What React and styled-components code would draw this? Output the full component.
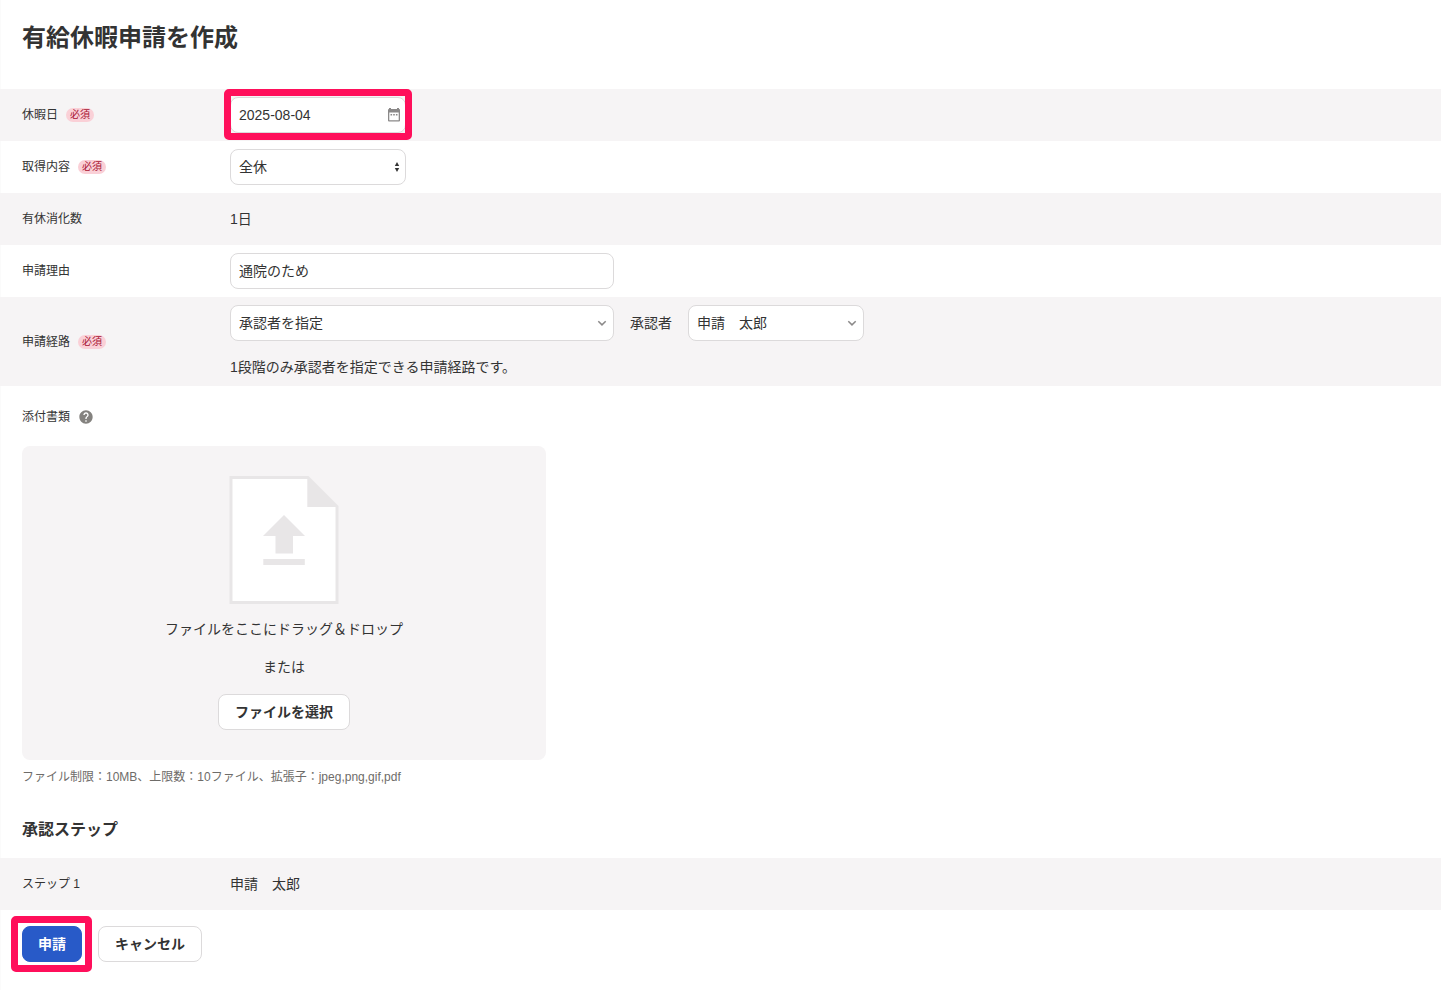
import { useState } from 'react';
import styled, { createGlobalStyle, css } from 'styled-components';

const colors = {
  text: '#333333',
  muted: '#6e6c69',
  stripe: '#f6f4f5',
  border: '#dcdadb',
  shape: '#e8e6e7',
  primary: '#285ac8',
  mark: '#ff0f5b'
};

const GlobalStyle = createGlobalStyle`
  * {
    box-sizing: border-box;
  }

  body {
    margin: 0;
    background: #ffffff;
    color: ${colors.text};
    font-family: "Liberation Sans", "Noto Sans CJK JP", sans-serif;
    font-size: 14px;
    line-height: 20px;
  }

  input, select, button {
    font: inherit;
    color: inherit;
  }
`;

const Page = styled.main`
  min-height: 990px;
  border-left: 1px solid #fbfbfb;
`;

const Title = styled.h1`
  margin: 0;
  padding: 22px 0 35px 21px;
  font-size: 24px;
  line-height: 32px;
`;

const SubTitle = styled.h2`
  margin: 0;
  padding: 31px 0 16px 21px;
  font-size: 16px;
  line-height: 24px;
`;

const Row = styled.div`
  display: grid;
  grid-template-columns: 208px 1fr;
  align-items: center;
  min-height: 52px;
  margin-left: -1px;
  padding: 8px 0 8px 22px;
  background: ${p => (p.$striped ? colors.stripe : 'transparent')};
`;

const Label = styled.div`
  display: flex;
  align-items: center;
  gap: 8px;
  height: ${p => (p.$tall ? 21 : 20)}px;
  font-size: 12px;
  padding: ${p => (p.$tall ? '1px 0 0' : '0 0 1px')};
`;

const Required = styled.span`
  padding: 0 4px;
  border-radius: 7px;
  background: #fad0d7;
  color: #a81434;
  font-size: 10px;
  line-height: 14px;
`;

const Line = styled.div`
  display: flex;
  align-items: center;
  gap: 16px;
`;

const Hint = styled.div`
  padding: 16px 0 1px;
`;

const Field = styled.label`
  position: relative;
  display: flex;
  align-items: center;
  width: ${p => (p.$wide ? 384 : 176)}px;
  height: 36px;

  svg {
    position: absolute;
    pointer-events: none;
  }
`;

const control = css`
  width: 100%;
  height: 36px;
  margin: 0;
  padding: 0 8px;
  border: 1px solid ${colors.border};
  border-radius: 8px;
  background: #ffffff;
  outline: none;
`;

const Input = styled.input`
  ${control}
  padding-bottom: ${p => p.$lift || 0}px;
`;

const Select = styled.select`
  ${control}
  appearance: none;
`;

// Red frame drawn over the form to point at a control
const Mark = styled.div`
  position: relative;
  width: fit-content;

  &::after {
    content: '';
    position: absolute;
    inset: ${p => p.$inset};
    border: 7px solid ${colors.mark};
    border-radius: 5px;
    pointer-events: none;
  }
`;

const Attachment = styled.section`
  padding: 21px 0 0 21px;
`;

const DropZone = styled.div`
  display: flex;
  flex-direction: column;
  align-items: center;
  width: 524px;
  height: 314px;
  margin-top: 19px;
  padding-top: 30px;
  border-radius: 8px;
  background: ${colors.stripe};
`;

const DropText = styled.p`
  margin: ${p => p.$top}px 0 0;
`;

const Note = styled.p`
  margin: 7px 0 0;
  color: ${colors.muted};
  font-size: 12px;
`;

const Button = styled.button`
  height: 36px;
  padding: 0 ${p => (p.$primary ? 15 : 16)}px;
  border: 1px solid ${p => (p.$primary ? colors.primary : colors.border)};
  border-radius: 8px;
  background: ${p => (p.$primary ? colors.primary : '#ffffff')};
  color: ${p => (p.$primary ? '#ffffff' : colors.text)};
  font-weight: bold;
`;

const FileButton = styled(Button)`
  margin-top: 17px;
`;

const Actions = styled.div`
  display: flex;
  gap: 16px;
  padding: 16px 21px;
`;

const CalendarIcon = () => (
  <svg width="14" height="16" viewBox="0 0 14 16" style={{ right: 5 }}>
    <path
      fill="#8b8989"
      fillRule="evenodd"
      d="M2 1h2v1h6V1h2v1h.2A1 1 0 0 1 13 3v10.500a1 1 0 0 1-1 1H2a1 1 0 0 1-1-1V3a1 1 0 0 1 1-1zM2.300 5.500v7.700h9.400V5.500z"
    />
    <path fill="#8b8989" d="M3.500 7h1.600v1.400H3.500zM6.200 7h1.600v1.400H6.200zM8.900 7h1.600v1.400H8.900z" />
  </svg>
);

const SortIcon = () => (
  <svg width="6" height="10" viewBox="0 0 6 10" style={{ right: 6 }}>
    <path fill={colors.text} d="M3 0 5.200 4H.8zM3 10 .8 6h4.400z" />
  </svg>
);

const ChevronIcon = () => (
  <svg width="10" height="8" viewBox="0 0 10 8" style={{ right: 7 }}>
    <path fill="none" stroke="#8b8989" strokeWidth="1.500" d="M1.300 2.200 5 5.900l3.700-3.700" />
  </svg>
);

const HelpIcon = () => (
  <svg width="16" height="16" viewBox="0 0 24 24">
    <path
      fill="#84827f"
      d="M12 2C6.480 2 2 6.480 2 12s4.480 10 10 10 10-4.480 10-10S17.520 2 12 2zm1 17h-2v-2h2v2zm2.070-7.750-.9.920C13.450 12.900 13 13.500 13 15h-2v-.5c0-1.100.45-2.100 1.170-2.830l1.240-1.260c.37-.36.59-.86.59-1.410 0-1.100-.9-2-2-2s-2 .9-2 2H8c0-2.210 1.790-4 4-4s4 1.790 4 4c0 .88-.36 1.680-.93 2.250z"
    />
  </svg>
);

const UploadIcon = () => (
  <svg width="110" height="128" viewBox="0 0 110 128">
    <path fill={colors.shape} d="M.5 0H79.500l30 30v98H.5z" />
    <path fill="#ffffff" d="M3.500 3h74.800v28h28.200v94h-103z" />
    <path fill={colors.shape} d="M55 39 76 60H64v17.500H46.500V60H34zM34.300 83h41.500v6H34.300z" />
  </svg>
);

const FormRow = ({ label, required, striped, tall, children }) => (
  <Row $striped={striped}>
    <Label $tall={tall}>
      {label}
      {required && <Required>必須</Required>}
    </Label>
    <div>{children}</div>
  </Row>
);

const App = () => {
  const [date, setDate] = useState('2025-08-04');
  const [reason, setReason] = useState('通院のため');

  return (
    <>
      <GlobalStyle />
      <Page>
        <Title>有給休暇申請を作成</Title>

        <FormRow label="休暇日" required striped>
          <Mark $inset="-8px -6px -7px">
            <Field>
              <Input value={date} onChange={e => setDate(e.target.value)} />
              <CalendarIcon />
            </Field>
          </Mark>
        </FormRow>
        <FormRow label="取得内容" required>
          <Field>
            <Select>
              <option>全休</option>
            </Select>
            <SortIcon />
          </Field>
        </FormRow>
        <FormRow label="有休消化数" striped>
          1日
        </FormRow>
        <FormRow label="申請理由">
          <Field $wide>
            <Input $lift={2} value={reason} onChange={e => setReason(e.target.value)} />
          </Field>
        </FormRow>
        <FormRow label="申請経路" required striped tall>
          <Line>
            <Field $wide>
              <Select>
                <option>承認者を指定</option>
              </Select>
              <ChevronIcon />
            </Field>
            <span>承認者</span>
            <Field>
              <Select>
                <option>申請　太郎</option>
              </Select>
              <ChevronIcon />
            </Field>
          </Line>
          <Hint>1段階のみ承認者を指定できる申請経路です。</Hint>
        </FormRow>

        <Attachment>
          <Label>
            添付書類
            <HelpIcon />
          </Label>
          <DropZone>
            <UploadIcon />
            <DropText $top={15}>ファイルをここにドラッグ＆ドロップ</DropText>
            <DropText $top={18}>または</DropText>
            <FileButton type="button">ファイルを選択</FileButton>
          </DropZone>
          <Note>ファイル制限：10MB、上限数：10ファイル、拡張子：jpeg,png,gif,pdf</Note>
        </Attachment>

        <SubTitle>承認ステップ</SubTitle>
        <FormRow label="ステップ 1" striped>
          申請　太郎
        </FormRow>

        <Actions>
          <Mark $inset="-10px -10px -10px -11px">
            <Button type="button" $primary>申請</Button>
          </Mark>
          <Button type="button">キャンセル</Button>
        </Actions>
      </Page>
    </>
  );
};

export default App;
